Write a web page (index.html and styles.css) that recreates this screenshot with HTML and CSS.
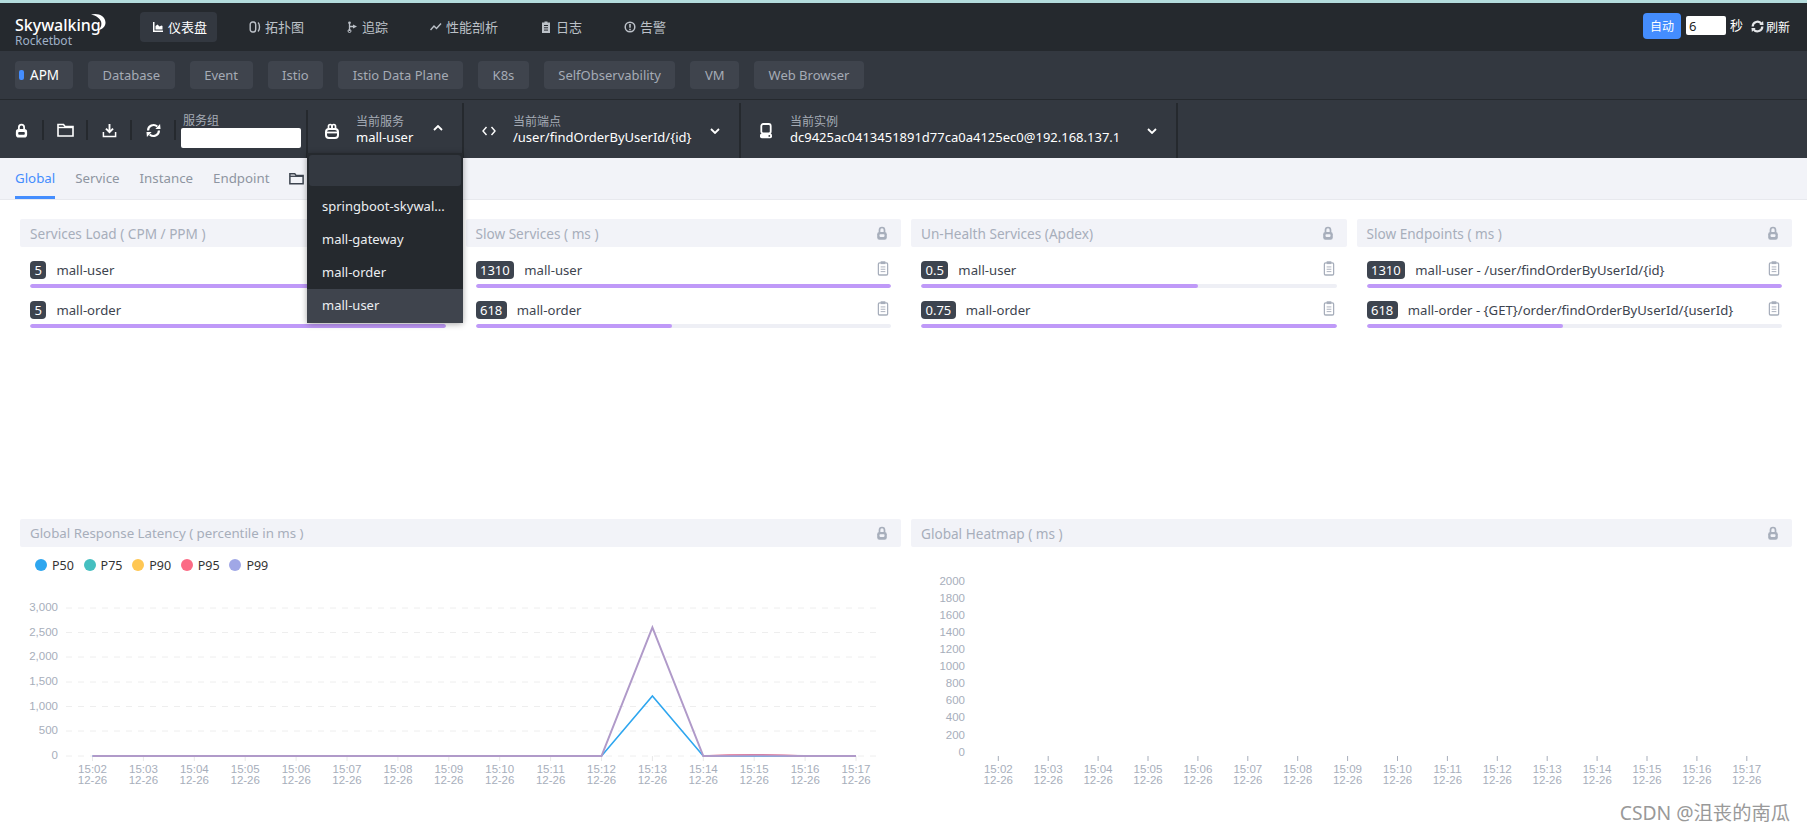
FILE: index.html
```html
<!DOCTYPE html>
<html lang="zh">
<head>
<meta charset="utf-8">
<title>Rocketbot</title>
<link rel="stylesheet" href="styles.css">
</head>
<body>
<div class="stripe"></div>

<header class="nav">
  <div class="logo">
    <svg class="logo-moon" width="16" height="18" viewBox="0 0 16 18"><path d="M1 1.500C8-.5 15.500 3 15.500 9.500c0 4-3 7-7.500 7.500 3-2 4-5 3-8.500C10 5.500 6 2.500 1 1.500z" fill="#fff"/></svg>
    <div class="logo-name">Skywalking</div>
    <div class="logo-sub">Rocketbot</div>
  </div>
  <nav class="nav-links">
    <a class="nav-link active"><svg class="ni" viewBox="0 0 12 12"><path d="M1 1h1.500v8.500H11V11H1zM3.500 8.500V5l2-1.500 2 2 2-1 1 .5v3.500z" fill="currentColor"/></svg>仪表盘</a>
    <a class="nav-link"><svg class="ni" viewBox="0 0 12 12"><rect x="1.200" y="1" width="5.500" height="10" rx="2.400" fill="none" stroke="currentColor" stroke-width="1.400"/><path d="M9 1.500c2 1.500 2 7.500 0 9" fill="none" stroke="currentColor" stroke-width="1.400"/></svg>拓扑图</a>
    <a class="nav-link"><svg class="ni" viewBox="0 0 12 12"><path d="M3.500 1v9M3.500 5.500H8" fill="none" stroke="currentColor" stroke-width="1.300"/><circle cx="3.500" cy="1.800" r="1.300" fill="currentColor"/><path d="M7 3.500l4 2-4 2z" fill="currentColor"/><circle cx="3.500" cy="10" r="1.500" fill="none" stroke="currentColor"/></svg>追踪</a>
    <a class="nav-link"><svg class="ni" viewBox="0 0 12 12"><path d="M.5 9l3.500-4 2.500 2.500L11 2.500" fill="none" stroke="currentColor" stroke-width="1.400"/></svg>性能剖析</a>
    <a class="nav-link"><svg class="ni" viewBox="0 0 12 12"><path d="M2 1.500h2.500V.5h3v1H10V12H2z" fill="currentColor"/><path d="M4 4.500h4M4 6.800h4M4 9.100h4" stroke="#25292e" stroke-width="1"/></svg>日志</a>
    <a class="nav-link"><svg class="ni" viewBox="0 0 12 12"><circle cx="6" cy="6" r="4.800" fill="none" stroke="currentColor" stroke-width="1.500"/><path d="M6 3v3.800M6 7.800v1.400" stroke="currentColor" stroke-width="1.600"/></svg>告警</a>
  </nav>
  <div class="refresh">
    <button class="auto-btn">自动</button>
    <input class="auto-input" value="6">
    <span class="sec">秒</span>
    <svg class="refresh-icon" viewBox="0 0 14 14"><path d="M1.800 7a5.200 5.200 0 0 1 9.400-3M12.200 7a5.200 5.200 0 0 1-9.400 3" fill="none" stroke="currentColor" stroke-width="2.400"/><path d="M9 5.500l4.500-.2L13 1zM5 8.500l-4.500.2L1 13z" fill="currentColor"/></svg>
    <span class="refresh-text">刷新</span>
  </div>
</header>

<div class="templates">
  <a class="tpl active"><i class="tpl-dot"></i>APM</a>
  <a class="tpl">Database</a>
  <a class="tpl">Event</a>
  <a class="tpl">Istio</a>
  <a class="tpl">Istio Data Plane</a>
  <a class="tpl">K8s</a>
  <a class="tpl">SelfObservability</a>
  <a class="tpl">VM</a>
  <a class="tpl">Web Browser</a>
</div>

<div class="toolbar">
  <div class="tools">
    <span class="tool"><svg class="ti" viewBox="0 0 14 16"><path d="M4.200 7V4.500a2.800 2.800 0 0 1 5.600 0V7" fill="none" stroke="#fff" stroke-width="1.900"/><rect x="1" y="6.500" width="12" height="9" rx="3" fill="#fff"/><rect x="3.500" y="9.500" width="7" height="3" rx="1" fill="#333840"/></svg></span>
    <span class="tool"><svg class="ti folder" viewBox="0 0 17 14"><path d="M1 1.500h5.500L8 3.500h8V13H1z" fill="none" stroke="#fff" stroke-width="1.600"/><path d="M1 4.500h15" stroke="#fff" stroke-width="1.400"/></svg></span>
    <span class="tool"><svg class="ti" viewBox="0 0 16 16"><path d="M8 1v8.500M4.200 6L8 9.800 11.800 6" fill="none" stroke="#fff" stroke-width="2"/><path d="M1.500 9.500v5h13v-5" fill="none" stroke="#fff" stroke-width="1.600"/></svg></span>
    <span class="tool"><svg class="ti" viewBox="0 0 16 16"><path d="M2.200 8a5.800 5.800 0 0 1 9.800-4.200M13.800 8a5.800 5.800 0 0 1-9.800 4.200" fill="none" stroke="#fff" stroke-width="2.300"/><path d="M10 6.300l5.500.2L15 1zM6 9.700l-5.500-.2L1 15z" fill="#fff"/></svg></span>
  </div>
  <div class="group-sel">
    <label class="sel-label">服务组</label>
    <input class="group-input">
  </div>

  <div class="selector sel-service">
    <svg class="si" viewBox="0 0 14 16"><path d="M3.500 7V3.200a1.700 1.700 0 0 1 3.400 0V7M7.100 7V3.200a1.700 1.700 0 0 1 3.400 0V7" fill="none" stroke="#fff" stroke-width="1.700"/><rect x="1" y="6" width="12" height="9" rx="3" fill="none" stroke="#fff" stroke-width="2"/><path d="M2 9.500h10" stroke="#fff" stroke-width="1.800"/></svg>
    <div class="sel-text">
      <div class="sel-label">当前服务</div>
      <div class="sel-value">mall-user</div>
    </div>
    <svg class="chev chev-up" viewBox="0 0 10 6"><path d="M1 5l4-4 4 4" fill="none" stroke="#fff" stroke-width="1.800"/></svg>
    <div class="dropdown">
      <div class="dd-search"></div>
      <div class="dd-item">springboot-skywal...</div>
      <div class="dd-item">mall-gateway</div>
      <div class="dd-item">mall-order</div>
      <div class="dd-item hover">mall-user</div>
    </div>
  </div>

  <div class="selector sel-endpoint">
    <svg class="si code" viewBox="0 0 14 10"><path d="M4.500 1L1 5l3.500 4M9.500 1L13 5 9.500 9" fill="none" stroke="#fff" stroke-width="1.400"/></svg>
    <div class="sel-text">
      <div class="sel-label">当前端点</div>
      <div class="sel-value">/user/findOrderByUserId/{id}</div>
    </div>
    <svg class="chev" viewBox="0 0 10 6"><path d="M1 1l4 4 4-4" fill="none" stroke="#fff" stroke-width="1.800"/></svg>
  </div>

  <div class="selector sel-instance">
    <svg class="si" viewBox="0 0 14 16"><rect x="2.300" y="1" width="9.400" height="9.500" rx="2" fill="none" stroke="#fff" stroke-width="1.800"/><rect x="1" y="10.500" width="12" height="4.800" rx="1.800" fill="#fff"/><circle cx="10.300" cy="12.900" r=".9" fill="#333840"/></svg>
    <div class="sel-text">
      <div class="sel-label">当前实例</div>
      <div class="sel-value">dc9425ac0413451891d77ca0a4125ec0@192.168.137.1</div>
    </div>
    <svg class="chev" viewBox="0 0 10 6"><path d="M1 1l4 4 4-4" fill="none" stroke="#fff" stroke-width="1.800"/></svg>
  </div>
</div>

<div class="tabs">
  <a class="tab active">Global</a>
  <a class="tab">Service</a>
  <a class="tab">Instance</a>
  <a class="tab">Endpoint</a>
  <svg class="tab-folder" viewBox="0 0 17 14"><path d="M1 1.500h5.500L8 3.500h8V13H1z" fill="none" stroke="#3d444f" stroke-width="1.700"/><path d="M1 4.500h15" stroke="#3d444f" stroke-width="1.500"/></svg>
</div>

<main class="grid">
  <section class="panel">
    <div class="panel-head"><span>Services Load ( CPM / PPM )</span><svg class="lock" viewBox="0 0 12 14"><use href="#i-lock"/></svg></div>
    <div class="row"><div class="row-main"><b class="badge">5</b><span class="row-name">mall-user</span><svg class="clip" viewBox="0 0 12 16"><use href="#i-clip"/></svg></div><div class="bar"><div class="fill" style="width:100%"></div></div></div>
    <div class="row"><div class="row-main"><b class="badge">5</b><span class="row-name">mall-order</span><svg class="clip" viewBox="0 0 12 16"><use href="#i-clip"/></svg></div><div class="bar"><div class="fill" style="width:100%"></div></div></div>
  </section>
  <section class="panel">
    <div class="panel-head"><span>Slow Services ( ms )</span><svg class="lock" viewBox="0 0 12 14"><use href="#i-lock"/></svg></div>
    <div class="row"><div class="row-main"><b class="badge">1310</b><span class="row-name">mall-user</span><svg class="clip" viewBox="0 0 12 16"><use href="#i-clip"/></svg></div><div class="bar"><div class="fill" style="width:100%"></div></div></div>
    <div class="row"><div class="row-main"><b class="badge">618</b><span class="row-name">mall-order</span><svg class="clip" viewBox="0 0 12 16"><use href="#i-clip"/></svg></div><div class="bar"><div class="fill" style="width:47.2%"></div></div></div>
  </section>
  <section class="panel">
    <div class="panel-head"><span>Un-Health Services (Apdex)</span><svg class="lock" viewBox="0 0 12 14"><use href="#i-lock"/></svg></div>
    <div class="row"><div class="row-main"><b class="badge">0.5</b><span class="row-name">mall-user</span><svg class="clip" viewBox="0 0 12 16"><use href="#i-clip"/></svg></div><div class="bar"><div class="fill" style="width:66.7%"></div></div></div>
    <div class="row"><div class="row-main"><b class="badge">0.75</b><span class="row-name">mall-order</span><svg class="clip" viewBox="0 0 12 16"><use href="#i-clip"/></svg></div><div class="bar"><div class="fill" style="width:100%"></div></div></div>
  </section>
  <section class="panel">
    <div class="panel-head"><span>Slow Endpoints ( ms )</span><svg class="lock" viewBox="0 0 12 14"><use href="#i-lock"/></svg></div>
    <div class="row"><div class="row-main"><b class="badge">1310</b><span class="row-name">mall-user - /user/findOrderByUserId/{id}</span><svg class="clip" viewBox="0 0 12 16"><use href="#i-clip"/></svg></div><div class="bar"><div class="fill" style="width:100%"></div></div></div>
    <div class="row"><div class="row-main"><b class="badge">618</b><span class="row-name">mall-order - {GET}/order/findOrderByUserId/{userId}</span><svg class="clip" viewBox="0 0 12 16"><use href="#i-clip"/></svg></div><div class="bar"><div class="fill" style="width:47.2%"></div></div></div>
  </section>

  <section class="panel wide">
    <div class="panel-head"><span class="head-tight">Global Response Latency ( percentile in ms )</span><svg class="lock" viewBox="0 0 12 14"><use href="#i-lock"/></svg></div>
    <div class="legend">
      <span class="lg"><i class="dot c50"></i>P50</span>
      <span class="lg"><i class="dot c75"></i>P75</span>
      <span class="lg"><i class="dot c90"></i>P90</span>
      <span class="lg"><i class="dot c95"></i>P95</span>
      <span class="lg"><i class="dot c99"></i>P99</span>
    </div>
    <svg class="chart line-chart" width="881" height="240" viewBox="20 580 881 240">
      <g class="grid-lines">
        <path d="M66 609H878M66 633.500H878M66 658H878M66 683H878M66 707.500H878M66 732H878M66 757H878"/>
      </g>
      <g class="ticks">
        <path d="M92.500 757v5M143.400 757v5M194.300 757v5M245.200 757v5M296.100 757v5M347 757v5M397.900 757v5M448.800 757v5M499.700 757v5M550.600 757v5M601.500 757v5M652.400 757v5M703.300 757v5M754.200 757v5M805.100 757v5M856 757v5"/>
      </g>
      <g class="axis-y" text-anchor="end">
        <text x="58" y="612">3,000</text><text x="58" y="637">2,500</text><text x="58" y="661">2,000</text><text x="58" y="686">1,500</text><text x="58" y="711">1,000</text><text x="58" y="735">500</text><text x="58" y="760">0</text>
      </g>
      <g class="axis-x" text-anchor="middle">
        <text x="92.500" y="774">15:02</text><text x="92.500" y="784.500">12-26</text>
        <text x="143.400" y="774">15:03</text><text x="143.400" y="784.500">12-26</text>
        <text x="194.300" y="774">15:04</text><text x="194.300" y="784.500">12-26</text>
        <text x="245.200" y="774">15:05</text><text x="245.200" y="784.500">12-26</text>
        <text x="296.100" y="774">15:06</text><text x="296.100" y="784.500">12-26</text>
        <text x="347" y="774">15:07</text><text x="347" y="784.500">12-26</text>
        <text x="397.900" y="774">15:08</text><text x="397.900" y="784.500">12-26</text>
        <text x="448.800" y="774">15:09</text><text x="448.800" y="784.500">12-26</text>
        <text x="499.700" y="774">15:10</text><text x="499.700" y="784.500">12-26</text>
        <text x="550.600" y="774">15:11</text><text x="550.600" y="784.500">12-26</text>
        <text x="601.500" y="774">15:12</text><text x="601.500" y="784.500">12-26</text>
        <text x="652.400" y="774">15:13</text><text x="652.400" y="784.500">12-26</text>
        <text x="703.300" y="774">15:14</text><text x="703.300" y="784.500">12-26</text>
        <text x="754.200" y="774">15:15</text><text x="754.200" y="784.500">12-26</text>
        <text x="805.100" y="774">15:16</text><text x="805.100" y="784.500">12-26</text>
        <text x="856" y="774">15:17</text><text x="856" y="784.500">12-26</text>
      </g>
      <path class="ln p50" d="M92.500 757H601.500L652.400 697 703.300 757H856"/>
      <path class="ln p95" d="M703.300 757Q754 754.500 805 757"/>
      <path class="ln p99" d="M92.500 757H601.500L652.400 628.500 703.300 757Q754 756 805 757H856"/>
    </svg>
  </section>

  <section class="panel wide">
    <div class="panel-head"><span>Global Heatmap ( ms )</span><svg class="lock" viewBox="0 0 12 14"><use href="#i-lock"/></svg></div>
    <svg class="chart" width="881" height="272" viewBox="911 548 881 272">
      <g class="ticks dark">
        <path d="M998.300 757v5M1048.200 757v5M1098.100 757v5M1148 757v5M1197.900 757v5M1247.800 757v5M1297.700 757v5M1347.600 757v5M1397.500 757v5M1447.400 757v5M1497.300 757v5M1547.200 757v5M1597.100 757v5M1647 757v5M1696.900 757v5M1746.800 757v5"/>
      </g>
      <g class="axis-y" text-anchor="end">
        <text x="965" y="586">2000</text><text x="965" y="603">1800</text><text x="965" y="620">1600</text><text x="965" y="637">1400</text><text x="965" y="654">1200</text><text x="965" y="671">1000</text><text x="965" y="688">800</text><text x="965" y="705">600</text><text x="965" y="722">400</text><text x="965" y="740">200</text><text x="965" y="757">0</text>
      </g>
      <g class="axis-x" text-anchor="middle">
        <text x="998.300" y="774">15:02</text><text x="998.300" y="784.500">12-26</text>
        <text x="1048.200" y="774">15:03</text><text x="1048.200" y="784.500">12-26</text>
        <text x="1098.100" y="774">15:04</text><text x="1098.100" y="784.500">12-26</text>
        <text x="1148" y="774">15:05</text><text x="1148" y="784.500">12-26</text>
        <text x="1197.900" y="774">15:06</text><text x="1197.900" y="784.500">12-26</text>
        <text x="1247.800" y="774">15:07</text><text x="1247.800" y="784.500">12-26</text>
        <text x="1297.700" y="774">15:08</text><text x="1297.700" y="784.500">12-26</text>
        <text x="1347.600" y="774">15:09</text><text x="1347.600" y="784.500">12-26</text>
        <text x="1397.500" y="774">15:10</text><text x="1397.500" y="784.500">12-26</text>
        <text x="1447.400" y="774">15:11</text><text x="1447.400" y="784.500">12-26</text>
        <text x="1497.300" y="774">15:12</text><text x="1497.300" y="784.500">12-26</text>
        <text x="1547.200" y="774">15:13</text><text x="1547.200" y="784.500">12-26</text>
        <text x="1597.100" y="774">15:14</text><text x="1597.100" y="784.500">12-26</text>
        <text x="1647" y="774">15:15</text><text x="1647" y="784.500">12-26</text>
        <text x="1696.900" y="774">15:16</text><text x="1696.900" y="784.500">12-26</text>
        <text x="1746.800" y="774">15:17</text><text x="1746.800" y="784.500">12-26</text>
      </g>
    </svg>
  </section>
</main>

<div class="watermark">CSDN @沮丧的南瓜</div>

<svg class="defs" width="0" height="0">
  <symbol id="i-lock" viewBox="0 0 12 14"><path d="M3.500 6.500V4a2.500 2.500 0 0 1 5 0v2.500" fill="none" stroke="#a7aebb" stroke-width="1.700"/><rect x="1.200" y="6" width="9.600" height="7.800" rx="2.200" fill="#a7aebb"/><rect x="3.500" y="8.300" width="5" height="2.600" rx=".8" fill="#f2f3f8"/></symbol>
  <symbol id="i-clip" viewBox="0 0 12 16"><rect x="1" y="2" width="10" height="13" rx="1.500" fill="none" stroke="#a7aebb" stroke-width="1.500"/><rect x="3.500" y=".3" width="5" height="3" fill="#a7aebb"/><path d="M3.500 6.300h5M3.500 8.800h5M3.500 11.300h5" stroke="#a7aebb" stroke-width="1"/></symbol>
</svg>
</body>
</html>
```
FILE: styles.css
```css
* { box-sizing: border-box; }
html, body { margin: 0; height: 100%; }
body {
  width: 1807px;
  height: 831px;
  overflow: hidden;
  position: relative;
  background: #fff;
  font-family: "Noto Sans", "Noto Sans CJK SC", sans-serif;
  font-size: 13px;
  color: #3d444f;
}
.stripe { height: 3px; background: #b4dcdd; }

.nav {
  height: 48px;
  background: #25292e;
  display: flex;
  align-items: center;
  padding: 0 17px 0 15px;
  color: #bcc1c8;
}
.logo { position: relative; width: 125px; height: 34px; }
.logo-name { color: #fff; font-size: 16px; font-weight: 500; line-height: 17px; margin-top: 6.500px; }
.logo-sub { color: #9fb0c6; font-size: 12px; line-height: 13px; margin-top: .5px; }
.logo-moon { position: absolute; left: 75px; top: 3px; }
.nav-links { display: flex; gap: 20px; flex: 1; }
.nav-link {
  height: 30px;
  padding: 0 10px 0 12px;
  display: flex;
  align-items: center;
  gap: 4px;
  border-radius: 4px;
  white-space: nowrap;
  line-height: 30px;
}
.nav-link.active { background: #333840; color: #fff; }
.ni { width: 12px; height: 12px; flex: none; }
.refresh { display: flex; align-items: center; color: #fff; }
.auto-btn {
  width: 38px; height: 26px;
  margin-top: -3px;
  border: 0; padding: 0;
  background: #448dfe; color: #fff;
  border-radius: 4px;
  font: inherit; font-size: 12px;
}
.auto-input {
  width: 40px; height: 19px;
  margin: -3px 4px 0 5px;
  border: 0; padding: 0 3px;
  border-radius: 2px;
  background: #fff; color: #222;
  font: inherit; font-size: 13px;
}
.sec { font-size: 13px; margin-top: -5px; }
.refresh-icon { width: 13px; height: 13px; margin: -2px 2px 0 8px; color: #e4e6e9; }
.refresh-text { font-size: 12px; }

.templates {
  background: #333840;
  display: flex;
  align-items: center;
  gap: 15px;
  padding: 0 15px;
  border-bottom: 1px solid #25292e;
  height: 49px;
}
.tpl {
  height: 28px;
  line-height: 28px;
  padding: 0 14.500px;
  border-radius: 4px;
  background: #3f444d;
  color: #a5abb5;
  white-space: nowrap;
}
.tpl.active { color: #fff; font-size: 13.500px; padding: 0 14px 0 4px; display: flex; align-items: center; gap: 6px; }
.tpl-dot { width: 5px; height: 10px; border-radius: 2px; background: #448dfe; }

.toolbar {
  height: 58px;
  background: #333840;
  display: flex;
  color: #fff;
  position: relative;
}
.tools { display: flex; align-items: center; margin-top: 2px; }
.tool {
  width: 44px;
  height: 20px;
  display: flex;
  align-items: center;
  justify-content: center;
  border-right: 2px solid #25292e;
}
.ti { width: 15px; height: 15px; }
.ti.folder { width: 17px; height: 14px; }
.group-sel { width: 132px; padding: 3px 0 0 5px; border-right: 2px solid #25292e; margin-top: 10px; }
.group-sel .sel-label { display: block; margin-left: 2px; }
.sel-label { font-size: 12px; line-height: 16px; color: #a5abb5; }
.group-input { display: block; width: 120px; height: 20px; border: 0; border-radius: 2px; background: #fff; margin: -1px 0 0 0; padding: 0; }

.selector {
  position: relative;
  display: flex;
  align-items: center;
  border-right: 2px solid #25292e;
  margin-top: 3px;
  height: 55px;
}
.sel-service { width: 157px; padding-left: 18px; margin-left: -1px; }
.sel-endpoint { width: 277px; padding-left: 18px; }
.sel-instance { width: 437px; padding-left: 18px; }
.si { width: 14px; height: 16px; flex: none; }
.si.code { height: 10px; }
.sel-text { margin-left: 17px; flex: none; padding-bottom: 3px; }
.sel-text .sel-value { font-size: 13px; line-height: 15px; color: #fff; white-space: nowrap; }
.chev { width: 10px; height: 6px; flex: none; position: absolute; top: 25px; }
.chev-up { top: 22px; }
.sel-service .chev { left: 126px; }
.sel-endpoint .chev { left: 246px; }
.sel-instance .chev { left: 406px; }

.dropdown {
  position: absolute;
  left: 0; top: 50px;
  width: 156px;
  height: 170px;
  background: #25292e;
  border-radius: 0 0 3px 3px;
  box-shadow: 0 1px 6px rgba(0,0,0,.35);
  padding: 2px 2px 0;
  z-index: 5;
}
.dd-search { height: 31px; background: #333840; border-radius: 3px; margin-bottom: 3.500px; }
.dd-item {
  height: 33px;
  line-height: 33px;
  margin: 0 -2px;
  padding: 0 15px;
  color: #eceef1;
  white-space: nowrap;
}
.dd-item.hover { background: #3f444d; height: 34px; }

.tabs {
  height: 42px;
  background: #f2f3f8;
  border-bottom: 1px solid #e8e9ee;
  display: flex;
  gap: 20px;
  padding: 0 0 0 15px;
  align-items: stretch;
  font-size: 13.300px;
}
.tab { line-height: 40px; color: #8e95a1; border-bottom: 3px solid transparent; height: 41px; }
.tab.active { color: #448dfe; border-bottom-color: #448dfe; }
.tab-folder { width: 15px; height: 13px; align-self: center; margin: 0 0 0 -1px; }

.grid {
  display: grid;
  grid-template-columns: repeat(4, 1fr);
  grid-template-rows: 300px auto;
  gap: 0 10px;
  padding: 19px 15px 0 20px;
}
.panel.wide { grid-column: span 2; }
.panel-head {
  height: 28px;
  background: #f2f3f8;
  border-radius: 2px;
  display: flex;
  align-items: center;
  justify-content: space-between;
  padding: 0 13px 0 10px;
  color: #a7aebb;
  font-size: 13.600px;
}
.panel-head .head-tight { font-size: 13.300px; }
.lock { width: 12px; height: 14px; }
.row { padding: 14px 10px 0; }
.row + .row { padding-top: 13px; }
.row-main { display: flex; align-items: center; height: 18px; position: relative; }
.badge {
  font-weight: 400;
  background: #3d444f;
  color: #fff;
  border-radius: 4px;
  height: 18px;
  line-height: 18px;
  padding: 0 4.500px;
  margin-right: 10px;
}
.row-name { color: #3d444f; font-size: 13.150px; }
.clip { width: 12px; height: 15px; position: absolute; right: 2px; top: 0; }
.bar { height: 4px; background: #eeeff5; border-radius: 2px; margin-top: 5px; overflow: hidden; }
.fill { height: 100%; background: #bf99f8; border-radius: 2px; }

.legend { display: flex; gap: 10px; padding: 10px 0 0 15px; height: 32px; }
.lg { display: flex; align-items: center; gap: 5px; width: 38.600px; font-size: 12.500px; color: #333; height: 16px; white-space: nowrap; }
.dot { width: 12px; height: 12px; border-radius: 50%; flex: none; }
.c50 { background: #2ea6ef; }
.c75 { background: #45bfc0; }
.c90 { background: #ffc753; }
.c95 { background: #fb6b85; }
.c99 { background: #a0a7e6; }

.chart { display: block; }
.grid-lines path { stroke: #eee; stroke-width: 1; stroke-dasharray: 6 6; fill: none; }
.ticks path { stroke: #e8e8e8; stroke-width: 1; fill: none; }
.ticks.dark path { stroke: #a7aebb; }
.axis-y text, .axis-x text { font-family: "Liberation Sans", sans-serif; font-size: 11.500px; fill: #a7aebb; }
.ln { fill: none; stroke-width: 2; }
.p50 { stroke: #2ea6ef; stroke-width: 1.600; }
.p95 { stroke: #fb6b85; stroke-width: 1.600; }
.p99 { stroke: #b09ac9; }

.watermark {
  position: absolute;
  right: 17px; bottom: 6px;
  font-size: 19.300px;
  line-height: 24px;
  color: #999;
}
.defs { position: absolute; }
```
